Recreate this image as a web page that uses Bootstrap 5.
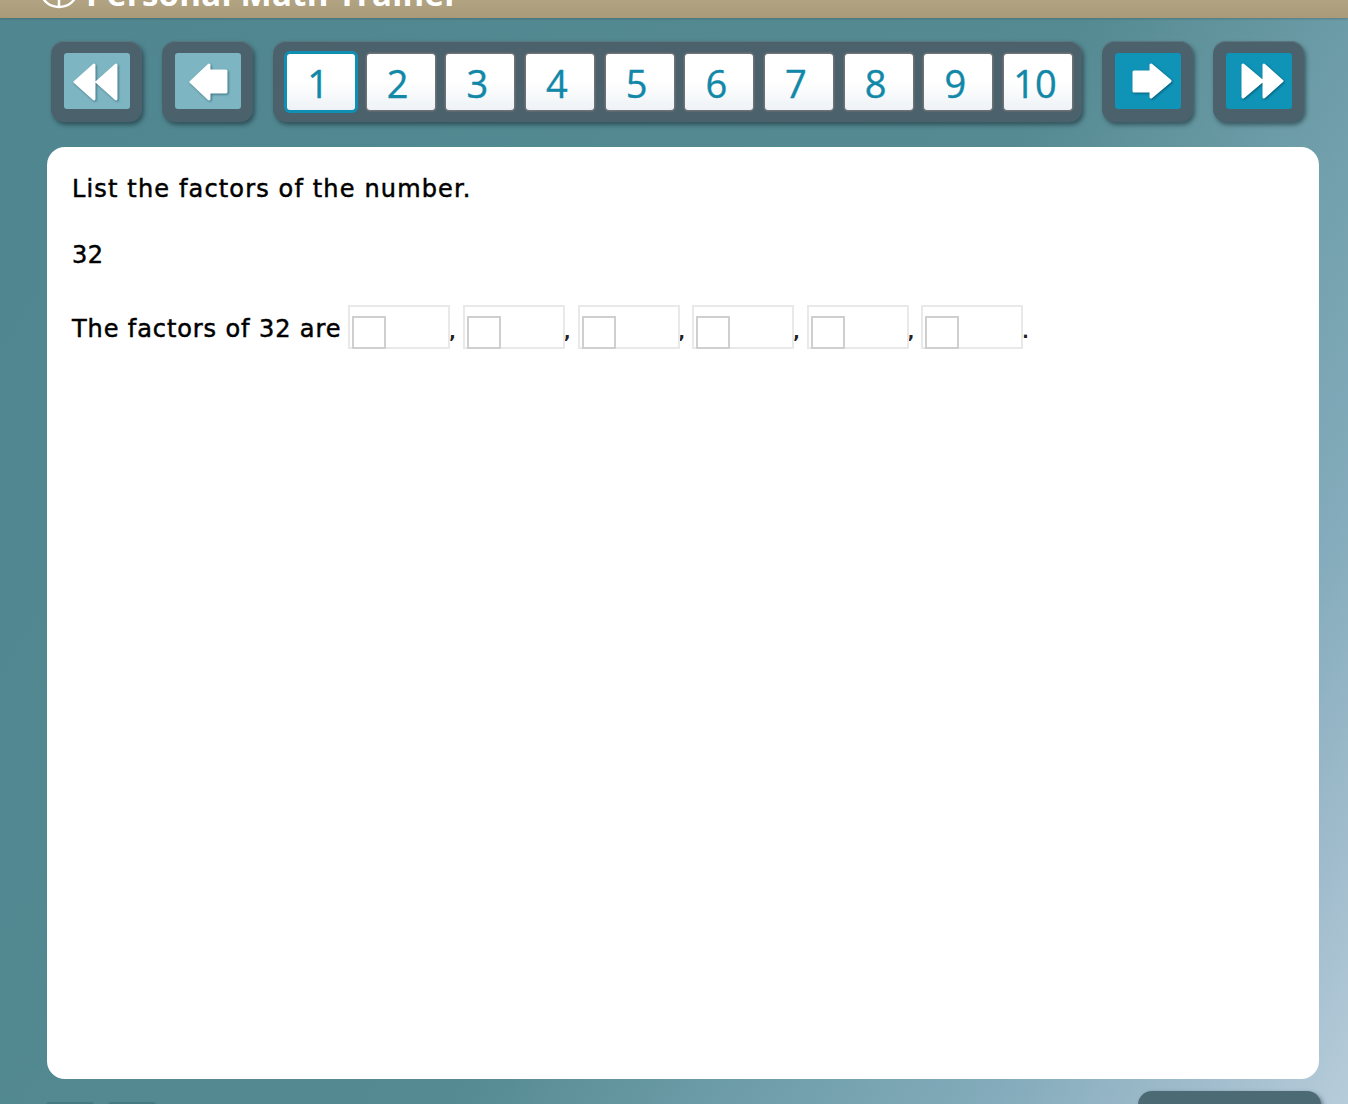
<!DOCTYPE html>
<html lang="en"><head><meta charset="utf-8"><title>Personal Math Trainer</title>
<link rel="stylesheet" href="https://cdn.jsdelivr.net/npm/bootstrap@5.3.0/dist/css/bootstrap.min.css">
<style>
html,body{height:1104px;overflow:hidden}
body{background:linear-gradient(120.6deg,#4f868f 0%,#558a92 55%,#6c9ca7 68%,#83abbb 82%,#a0bccc 92%,#b7ccda 100%);font-family:"DejaVu Sans","Liberation Sans",sans-serif;color:#000}
.shell{width:1348px;height:1104px;overflow:hidden}
.topbar{height:18px;background:linear-gradient(180deg,#b2a482,#a99b79);color:#fff;overflow:hidden;padding-left:40px;font:700 33px/1 "Open Sans",sans-serif;box-shadow:0 1px 2px rgba(60,80,80,.4)}
.topbar-row{margin-top:-24px;letter-spacing:.25px}
.navstrip{height:129px;padding:23px 0 0 51px;gap:20px}
.plate{background:#4b626c;border-radius:13px;box-shadow:inset 0 1px 0 #5d7681,2px 3px 4px rgba(20,40,50,.55);height:81px}
.plate-btn{width:91px;padding:12px 0 0 13px}
.tile{width:66px;height:56px;border-radius:3px;display:flex}
.tile svg{filter:drop-shadow(1px 1px 1px rgba(0,50,70,.55))}
.tile-off{background:#7db6c2}
.tile-on{background:#0f93b7}
.pager{width:809px;padding:13px 0 0 14px;gap:11.67px}
.numkey{width:68px;height:56px;background:linear-gradient(180deg,#fff 50%,#eef2f6);border:0;border-radius:3px;box-shadow:0 0 0 1.5px #6f7275;color:#1188a8;font:400 38px/58px "Open Sans",sans-serif;text-align:center;padding:0 6px 0 0;-webkit-text-stroke:.4px #1188a8}
.numkey.current{box-shadow:0 0 0 3px #0f8fb3}
.sheet{width:1272px;height:932px;margin-left:47px;background:#fff;border-radius:18px;padding:26px 25px;font-size:24px;line-height:32px;-webkit-text-stroke:.5px #000}
.sheet .q-lead{margin:0;letter-spacing:1.15px}
.sheet .q-num{margin:34px 0 0;letter-spacing:.6px}
.q-answer{margin-top:34px;letter-spacing:.9px}
.q-label{padding-top:4px;margin-right:7px}
.blank{width:102px;height:44px;border:2px solid #e9e9e9;position:relative;flex:none;-webkit-text-stroke:0}
.blank::after{content:"";position:absolute;left:2px;bottom:-2px;width:34px;height:33px;border:2px solid #cfcfcf}
.sep{width:12.6px;flex:none;font-size:17px;line-height:17px;font-weight:700;align-self:flex-end;margin-bottom:8px;margin-left:-1px;margin-right:1px;-webkit-text-stroke:0;color:#222}
.footer-plate{position:absolute;left:1138px;top:1091px;width:183px;height:40px;background:#4b6a74;border-radius:14px;box-shadow:2px 2px 4px rgba(20,40,50,.5)}
.footer-mini{position:absolute;top:1102px;width:48px;height:6px;background:#447a80;border-radius:4px}
</style></head>
<body>
<div class="shell position-relative">
  <div class="topbar"><div class="topbar-row d-flex align-items-center gap-2">
    <svg width="38" height="34" viewBox="0 0 38 34" fill="none" stroke="#fff" stroke-width="2.5"><ellipse cx="19" cy="17" rx="17" ry="14"/><path d="M19 4v26M8 14c6-4 16-4 22 0"/></svg>
    <span>Personal Math Trainer</span></div></div>
  <div class="navstrip d-flex align-items-start">
    <div class="plate plate-btn"><div class="tile tile-off"><svg width="66" height="56" viewBox="0 0 66 56" fill="#fff"><path d="M11 29 30 12V46ZM33 29 52 12V46Z" stroke="#fff" stroke-linejoin="round" stroke-width="3"/></svg></div></div>
    <div class="plate plate-btn"><div class="tile tile-off"><svg width="66" height="56" viewBox="0 0 66 56" fill="#fff"><path d="M16 29 34 12V18H51V39H34V46Z" stroke="#fff" stroke-linejoin="round" stroke-width="3"/></svg></div></div>
    <div class="plate pager d-flex align-items-start">
      <button class="btn numkey current">1</button><button class="btn numkey">2</button><button class="btn numkey">3</button><button class="btn numkey">4</button><button class="btn numkey">5</button><button class="btn numkey">6</button><button class="btn numkey">7</button><button class="btn numkey">8</button><button class="btn numkey">9</button><button class="btn numkey">10</button>
    </div>
    <div class="plate plate-btn"><div class="tile tile-on"><svg width="66" height="56" viewBox="0 0 66 56" fill="#fff"><path d="M55 28 36 12V19H19V38H36V44Z" stroke="#fff" stroke-linejoin="round" stroke-width="3"/></svg></div></div>
    <div class="plate plate-btn"><div class="tile tile-on"><svg width="66" height="56" viewBox="0 0 66 56" fill="#fff"><path d="M36 28 17 12V44ZM56 28 38 12V44Z" stroke="#fff" stroke-linejoin="round" stroke-width="3"/></svg></div></div>
  </div>
  <main class="sheet">
    <p class="q-lead">List the factors of the number.</p>
    <p class="q-num">32</p>
    <div class="q-answer d-flex align-items-center">
      <span class="q-label">The factors of 32 are</span>
      <span class="blank"></span><span class="sep">,</span>
      <span class="blank"></span><span class="sep">,</span>
      <span class="blank"></span><span class="sep">,</span>
      <span class="blank"></span><span class="sep">,</span>
      <span class="blank"></span><span class="sep">,</span>
      <span class="blank"></span><span class="sep">.</span>
    </div>
  </main>
  <div class="footer-mini" style="left:46px"></div><div class="footer-mini" style="left:108px"></div>
  <div class="footer-plate"></div>
</div>
</body></html>
